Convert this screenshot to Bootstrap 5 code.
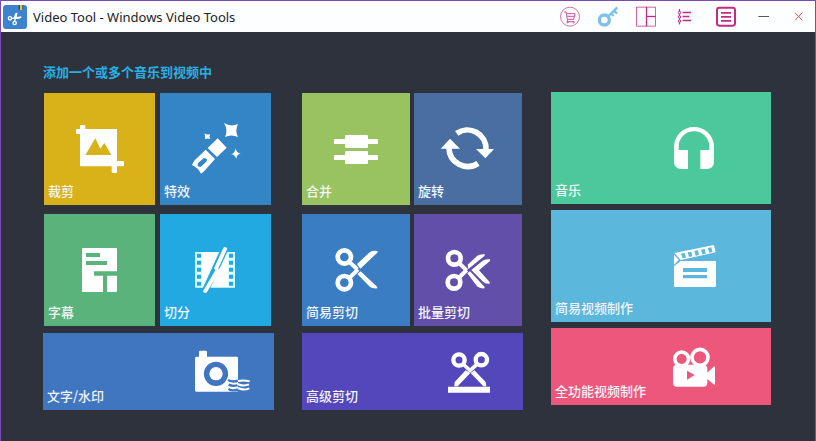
<!DOCTYPE html>
<html lang="zh-CN">
<head>
<meta charset="utf-8">
<meta name="viewport" content="width=device-width, initial-scale=1">
<title>Video Tool - Windows Video Tools</title>
<link href="https://cdn.jsdelivr.net/npm/bootstrap@5.3.0/dist/css/bootstrap.min.css" rel="stylesheet">
<style>
body { font-family: "Noto Sans", "Noto Sans CJK SC", sans-serif; font-size: 13px; line-height: 18px; }
.app-window { background: #2d323c; border: 1px solid #7a4bb5; }
.title-bar { height: 31px; background: #fdfeff; color: #222; padding: 0 2px; }
.app-logo { width: 24px; height: 24px; }
.app-title { font-size: 13px; line-height: 18px; padding-left: 6px; }
.tool-btn { width: 38px; height: 31px; border-radius: 0; }
.tool-btn svg { width: 30px; height: 30px; }
.close-btn { width: 30px; }
.pink { color: #c42b80; }
.workspace { padding: 30px 44px 31px 42px; }
.hint { font-size: 13px; line-height: 20px; color: #29b0e4; font-family: "Noto Sans CJK SC", sans-serif; margin-bottom: 10px; }
.board { grid-template-columns: 231fr 221fr 220fr; column-gap: 28px; }
.stack { gap: 7px; padding-top: 1px; }
.pair-a { gap: 5px; padding: 0 3px 0 1px; }
.pair-b { gap: 4px; padding-right: 1px; }
.pair-a + .pair-a, .pair-b + .pair-b { margin-top: 2px; }
.stack-wide { gap: 6px; }
.tile { display: grid; align-items: center; justify-items: center; height: 112px; padding: 0; border: 0; border-radius: 0; color: #fff; font-family: "Noto Sans CJK SC", sans-serif; font-size: 13px; font-weight: 500; line-height: 18px; }
.tile:hover { filter: brightness(1.08); }
.tile > * { grid-area: 1 / 1; }
.tile svg { width: 56px; height: 56px; fill: #fff; }
.tile-label { align-self: end; justify-self: start; padding: 0 0 5px 4px; color: #f2f4f8; }
.tile-low { height: 77px; }
.icon-end svg { justify-self: end; margin-right: 24px; }
.icon-inner svg { justify-self: end; margin-right: 49px; }
.c-gold { background: #d9b118; } .c-blue { background: #3485c5; }
.c-green { background: #59b37a; } .c-cyan { background: #22a9e1; }
.c-royal { background: #4076c0; } .c-lime { background: #99c260; }
.c-steel { background: #496fa2; } .c-azure { background: #3a7dc3; }
.c-violet { background: #624faa; } .c-indigo { background: #5347bb; }
.c-mint { background: #4cc99c; } .c-sky { background: #5cb7dc; }
.c-rose { background: #ec577b; }
</style>
<script src="https://cdn.jsdelivr.net/npm/bootstrap@5.3.0/dist/js/bootstrap.bundle.min.js"></script>
</head>
<body>
<div class="app-window min-vh-100 d-flex flex-column">
  <header class="title-bar d-flex align-items-center">
    <svg class="app-logo flex-shrink-0" viewBox="9 12 72 72" aria-hidden="true">
      <rect x="9" y="12" width="72" height="72" rx="9" fill="#3b82cf"/>
      <path fill="#3a4a55" d="M56 12h4v14h-4z"/><path fill="#f0c040" d="M60 12h6v15h-6z"/><path fill="#58606a" d="M66 12h4v12h-4z"/>
      <g fill="none" stroke="#fff" stroke-width="4"><circle cx="30" cy="52" r="5"/><circle cx="44" cy="66" r="5"/><path d="M35 52l29-3M44 61l5-25"/></g>
      <path fill="#fff" d="M42 48l3-9 8-5-3 14 14-2-6 7-16 1z"/>
    </svg>
    <h1 class="app-title mb-0 fw-normal text-nowrap">Video Tool - Windows Video Tools</h1>
    <nav class="d-flex ms-auto" aria-label="Window tools">
      <button type="button" class="btn tool-btn p-0 pink" aria-label="Store">
        <svg viewBox="18 4 90 90" fill="none" stroke="currentColor" stroke-width="3" opacity=".8"><circle cx="63" cy="48" r="28.5" stroke-width="2.5"/><path d="M45 34h6l4 22h19l4-17H52M57 56l-3 7h21M55 47h21"/><circle cx="56" cy="65" r="2"/><circle cx="74" cy="65" r="2"/></svg>
      </button>
      <button type="button" class="btn tool-btn p-0" aria-label="Register">
        <svg viewBox="132 4 90 90" fill="none" stroke="#7fc0e6"><circle cx="166" cy="58" r="15" stroke-width="10"/><path stroke-width="7" d="M177 48l28-28M187 38l7 8M195 30l9 9"/></svg>
      </button>
      <button type="button" class="btn tool-btn p-0 pink" aria-label="Layout">
        <svg viewBox="246 4 90 90" fill="none" stroke="currentColor" stroke-width="3"><path d="M262.5 19.5h57v57h-57z" opacity=".75"/><path d="M292.5 19v58" stroke-width="4"/><path d="M293 47.5h27" stroke-width="4"/></svg>
      </button>
      <button type="button" class="btn tool-btn p-0 pink" aria-label="Settings">
        <svg viewBox="360 4 90 90" fill="none" stroke="currentColor" stroke-width="4"><path d="M391.5 25v46"/><path d="M401 35.500h25M401 47.500h20M401 59.500h25" stroke-width="5"/><path fill="#fff" stroke-width="3" d="M391.500 31l4 5-4 5-4-5zM391.500 44l4 5-4 5-4-5zM391.500 56l4 5-4 5-4-5z"/></svg>
      </button>
      <button type="button" class="btn tool-btn p-0 pink ms-1" aria-label="Menu">
        <svg viewBox="486 4 90 90" fill="none" stroke="currentColor" stroke-width="6"><rect x="504" y="21" width="54" height="54" rx="7"/><path d="M516 36.5h30M516 48.5h30M516 60.5h30" stroke-width="5"/></svg>
      </button>
      <button type="button" class="btn tool-btn p-0" aria-label="Minimize">
        <svg viewBox="600 4 90 90" stroke="#555" stroke-width="3"><path d="M628 47.5h32"/></svg>
      </button>
      <button type="button" class="btn tool-btn close-btn p-0" aria-label="Close">
        <svg viewBox="702 4 90 90" fill="none" stroke="#e2564f" stroke-width="3"><path d="M735 36l22 23M757 36l-22 23"/></svg>
      </button>
    </nav>
  </header>

  <main class="workspace flex-grow-1">
    <h2 class="hint fw-bold">添加一个或多个音乐到视频中</h2>
    <div class="board d-grid">
      <section class="stack d-flex flex-column" aria-label="编辑">
        <div class="pair-a d-flex">
          <button type="button" class="btn tile flex-fill w-50 c-gold">
            <svg viewBox="108 105 168 168" aria-hidden="true"><path fill-rule="evenodd" d="M136 117h8q4 0 4 4v8h95v96h18q3 0 3 3v10q0 3-3 3h-18v17q0 3-3 3h-10q-3 0-3-3v-17h-95v-97h-9q-3 0-3-3v-9q0-3 3-3h9v-8q0-4 4-4zM148 207h78l-21-36-12 17-15-31z"/></svg>
            <span class="tile-label">裁剪</span>
          </button>
          <button type="button" class="btn tile flex-fill w-50 c-blue">
            <svg viewBox="456 105 168 168" aria-hidden="true"><path d="M545 157l27 28-29 28-28-27z"/><path fill-rule="evenodd" d="M509 191l28 28-32 36q-3 3-10 8-4-8-10-15-8-6-17-11 3-7 8-14zM504 216l-18 15-1 10 9 2 18-17 1-7z"/><path d="M564 111q21 13 42 3-10 20 0 39-20-9-39 0 10-20-3-42zM505 142q9 6 17 2-3 8 1 15-9-4-16 1 2-9-2-18zM599 187q2 15 15 16-13 2-13 16-4-14-16-14 13-4 14-18z"/></svg>
            <span class="tile-label">特效</span>
          </button>
        </div>
        <div class="pair-a d-flex">
          <button type="button" class="btn tile flex-fill w-50 c-green">
            <svg viewBox="108 102 168 168" aria-hidden="true"><path fill-rule="evenodd" d="M142 120h97q4 0 4 4v66h-69v13h27v49h-63V124q0-4 4-4zM150 135v12h42v-12zM150 159v12h63v-12zM213 203h30v45q0 4-4 4h-26z"/></svg>
            <span class="tile-label">字幕</span>
          </button>
          <button type="button" class="btn tile flex-fill w-50 c-cyan">
            <svg viewBox="456 102 168 168" aria-hidden="true"><path fill="#d9ffff" fill-rule="evenodd" d="M477 132h73l-48 107h-25zM483 137v12h12v-12zM483 158v12h12v-12zM483 179v12h12v-12zM483 200v12h12v-12zM483 221v12h12v-12zM572 132h25v107h-75zM579 137v12h12v-12zM579 158v12h12v-12zM579 179v12h12v-12zM579 200v12h12v-12zM579 221v12h12v-12z"/><path d="M498 133h48l-48 103zM575 133v104h-50z"/><path d="M567 123l-60 127" stroke="#22a9e1" stroke-width="20"/><path d="M567 123l-26 57 3 8-36 61" fill="none" stroke="#fff" stroke-width="12" stroke-linecap="round"/></svg>
            <span class="tile-label">切分</span>
          </button>
        </div>
        <button type="button" class="btn tile tile-low icon-end w-100 c-royal">
          <svg viewBox="474 52 168 168" aria-hidden="true"><path fill-rule="evenodd" d="M493 72h16q4 0 4 4v14h89q4 0 4 4v97q0 4-4 4H481q-4 0-4-4V94q0-4 4-4h8V76q0-4 4-4zM540 105a36 36 0 1 0 0 73a36 36 0 1 0 0-73z"/><circle cx="540" cy="141" r="20"/><g fill="none" stroke-width="7"><path stroke="#4076c0" d="M576 160q14 8 30 2M578 174q14 7 28 1M577 187q14 8 29 1"/><path stroke="#fff" d="M606 163q18-3 35 1M604 172q18 8 35 1M606 184q18 8 34 1" stroke-width="6"/></g></svg>
          <span class="tile-label">文字/水印</span>
        </button>
      </section>

      <section class="stack d-flex flex-column" aria-label="剪切">
        <div class="pair-b d-flex">
          <button type="button" class="btn tile flex-fill w-50 c-lime">
            <svg viewBox="96 105 168 168" aria-hidden="true"><rect x="147" y="147" width="69" height="39" rx="3"/><rect x="147" y="195" width="69" height="39" rx="3"/><path d="M114 159h132v15H114zM114 207h132v15H114z"/></svg>
            <span class="tile-label">合并</span>
          </button>
          <button type="button" class="btn tile flex-fill w-50 c-steel">
            <svg viewBox="432 105 168 168" aria-hidden="true"><g fill="none" stroke="#fff" stroke-width="17"><path d="M482 142A56 56 0 0 1 570 190"/><path d="M546 232A56 56 0 0 1 459 186"/></g><path d="M540 189h54l-26 28zM434 188h58l-30-30z"/></svg>
            <span class="tile-label">旋转</span>
          </button>
        </div>
        <div class="pair-b d-flex">
          <button type="button" class="btn tile flex-fill w-50 c-azure">
            <svg viewBox="96 102 168 168" aria-hidden="true"><g fill="none" stroke="#fff"><circle cx="145" cy="147" r="20" stroke-width="14"/><circle cx="145" cy="224" r="20" stroke-width="14"/><path stroke-width="12" d="M159 161l25 23M160 210l26-26"/></g><path d="M183 168l39-36q7-5 23-3l-1 5-51 48zM184 198l38 39q7 5 22 4v-4l-50-47z"/></svg>
            <span class="tile-label">简易剪切</span>
          </button>
          <button type="button" class="btn tile flex-fill w-50 c-violet">
            <svg viewBox="432 102 168 168" aria-hidden="true"><g fill="none" stroke="#fff"><circle cx="475" cy="151" r="19" stroke-width="14"/><circle cx="474" cy="223" r="19" stroke-width="14"/><path stroke-width="12" d="M489 165l23 22M488 210l24-24"/></g><path d="M515 170l29-27q9-6 23-4l-2 5-48 39zM514 196l8-6 44 47-1 4q-14 1-22-6zM526 186l34-28q8-6 22-4v5l-33 28 32 35v5q-14 1-20-6z"/></svg>
            <span class="tile-label">批量剪切</span>
          </button>
        </div>
        <button type="button" class="btn tile tile-low icon-end w-100 c-indigo">
          <svg viewBox="441 52 168 168" aria-hidden="true"><g fill="none" stroke="#fff"><circle cx="489" cy="100" r="17" stroke-width="13"/><circle cx="556" cy="99" r="17" stroke-width="13"/><path stroke-width="11" d="M501 112l23 21M544 112l-25 22"/></g><path d="M509 131l14 8-38 40h-10l1-13zM524 139l11-8 34 35 2 13h-9zM456 180h126v18H456z"/></svg>
          <span class="tile-label">高级剪切</span>
        </button>
      </section>

      <section class="stack-wide d-flex flex-column" aria-label="制作">
        <button type="button" class="btn tile icon-inner w-100 c-mint">
          <svg viewBox="363 102 168 168" aria-hidden="true"><path d="M387 226v-44a60 59 0 0 1 120 0v44q0 23-23 23h-18v-57h27v-10a46 46 0 0 0-92 0v10h28v57h-19q-23 0-23-23z"/></svg>
          <span class="tile-label">音乐</span>
        </button>
        <button type="button" class="btn tile icon-inner w-100 c-sky">
          <svg viewBox="363 96 168 168" aria-hidden="true"><path fill-rule="evenodd" d="M407 165h106v74q0 4-4 4H391q-4 0-4-4v-58zM414 186v12h72v-12zM414 207v10h72v-10zM387 146l14 15-14 16zM388 141l119-24 5 22-105 23zM408 143l5 14 10-2-4-14zM428 139l4 14 10-2-3-14zM448 135l4 14 10-2-3-14zM468 131l4 14 10-2-3-14zM488 126l5 14 9-2-3-14z"/></svg>
          <span class="tile-label">简易视频制作</span>
        </button>
        <button type="button" class="btn tile tile-low icon-inner w-100 c-rose">
          <svg viewBox="363 49 168 168" aria-hidden="true"><g fill="none" stroke="#fff" stroke-width="11"><circle cx="410" cy="109" r="20.5"/><circle cx="465" cy="104" r="24"/></g><path fill-rule="evenodd" d="M396 126h79q12 0 12 12v12l19-18q4-2 4 2v49q0 5-4 2l-19-16v11q0 12-12 12h-79q-12 0-12-12v-42q0-12 12-12zM426 144v27l23-14z"/></svg>
          <span class="tile-label">全功能视频制作</span>
        </button>
      </section>
    </div>
  </main>
</div>
</body>
</html>
